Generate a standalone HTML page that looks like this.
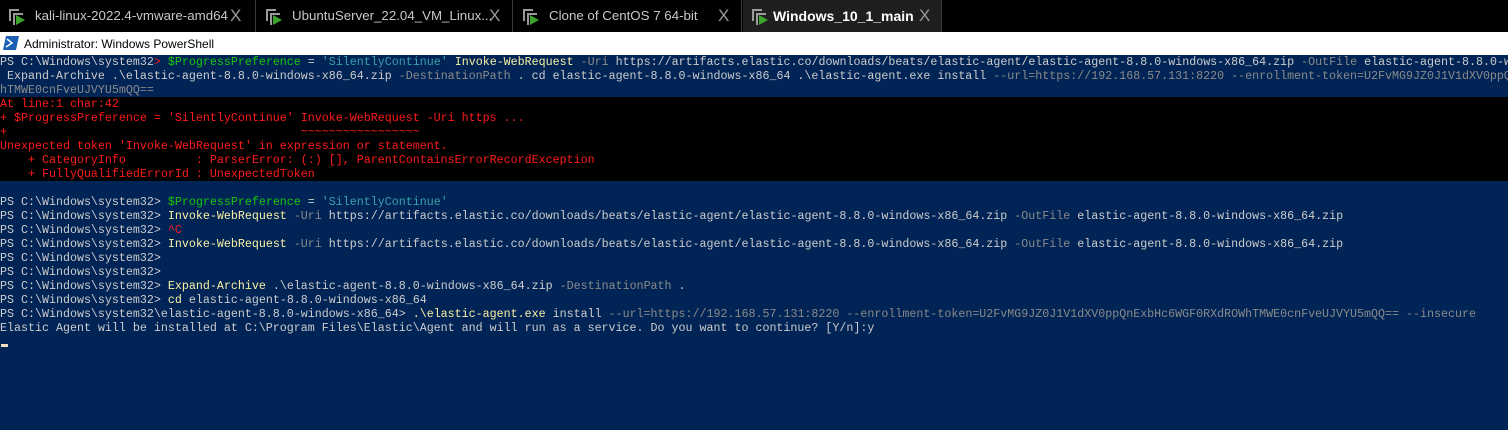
<!DOCTYPE html>
<html><head><meta charset="utf-8"><style>
*{margin:0;padding:0;box-sizing:border-box}
body{width:1508px;height:430px;overflow:hidden;background:#012456;position:relative;font-family:"Liberation Sans",sans-serif}
#tabs{position:absolute;left:0;top:0;width:1508px;height:32px;background:#000}
.tab{position:absolute;top:0;height:32px;border-right:1px solid #3a3a3a;color:#c8c8c8;font-size:13.3px}
.tab .ic{position:absolute;left:8px;top:7px}
.tab .t{position:absolute;left:35px;top:8px;white-space:nowrap}
.tab .x{position:absolute;top:6px;font-size:17px;color:#9a9a9a}
#title{position:absolute;left:0;top:32px;width:1508px;height:23px;background:#fff;font-size:12px;color:#000}
#title .t{position:absolute;left:24px;top:5px}
#term{position:absolute;left:0;top:55px;width:1508px;font-family:"Liberation Mono",monospace;font-size:11.67px;line-height:14px;color:#cccccc;overflow:hidden}
.l{height:14px;overflow:hidden;white-space:pre}
.blk{background:#000}
.r{color:#ff1a1a}.g{color:#16c60c}.y{color:#f9f1a5}.d{color:#8a8a8a}.s{color:#3aa0a8}.w{color:#cccccc}
</style></head><body>
<div id="tabs">
 <div class="tab" style="left:0;width:256px"><svg class="ic" width="20" height="20" viewBox="0 0 20 20"><path d="M1 2h10v2H3v10H1z M5 6h10v2H7v10H5z" fill="#9a9a9a"/><path d="M8 8l9 5-9 5z" fill="#3aa52a"/></svg><span class="t">kali-linux-2022.4-vmware-amd64</span><span class="x" style="left:230px">X</span></div>
 <div class="tab" style="left:257px;width:256px"><svg class="ic" width="20" height="20" viewBox="0 0 20 20"><path d="M1 2h10v2H3v10H1z M5 6h10v2H7v10H5z" fill="#9a9a9a"/><path d="M8 8l9 5-9 5z" fill="#3aa52a"/></svg><span class="t">UbuntuServer_22.04_VM_Linux...</span><span class="x" style="left:232px">X</span></div>
 <div class="tab" style="left:514px;width:228px"><svg class="ic" width="20" height="20" viewBox="0 0 20 20"><path d="M1 2h10v2H3v10H1z M5 6h10v2H7v10H5z" fill="#9a9a9a"/><path d="M8 8l9 5-9 5z" fill="#3aa52a"/></svg><span class="t">Clone of CentOS 7 64-bit</span><span class="x" style="left:204px">X</span></div>
 <div class="tab" style="left:743px;width:199px;background:#1f1f1f"><svg class="ic" width="20" height="20" viewBox="0 0 20 20"><path d="M1 2h10v2H3v10H1z M5 6h10v2H7v10H5z" fill="#9a9a9a"/><path d="M8 8l9 5-9 5z" fill="#3aa52a"/></svg><span class="t" style="left:30px;color:#fff;font-weight:bold;font-size:14px">Windows_10_1_main</span><span class="x" style="left:176px">X</span></div>
</div>
<div id="title"><svg style="position:absolute;left:3px;top:4px" width="16" height="14" viewBox="0 0 16 14"><path d="M3 0h13l-3 14H0z" fill="#1b5fb5"/><path d="M4 3l5 4-6 4" stroke="#fff" stroke-width="1.5" fill="none"/></svg><span class="t">Administrator: Windows PowerShell</span></div>
<div id="term"><div class="l">PS C:\Windows\system32<span class="r">&gt;</span> <span class="g">$ProgressPreference</span> = <span class="s">'SilentlyContinue'</span> <span class="y">Invoke-WebRequest</span> <span class="d">-Uri</span> https://artifacts.elastic.co/downloads/beats/elastic-agent/elastic-agent-8.8.0-windows-x86_64.zip <span class="d">-OutFile</span> elastic-agent-8.8.0-windows-x86_64.zip</div><div class="l"> Expand-Archive .\elastic-agent-8.8.0-windows-x86_64.zip <span class="d">-DestinationPath</span> . cd elastic-agent-8.8.0-windows-x86_64 .\elastic-agent.exe install <span class="d">--url=https://192.168.57.131:8220 --enrollment-token=U2FvMG9JZ0J1V1dXV0ppQnExbHc6WGF0RXdROWhTMWE0cnFveUJVYU5mQQ==</span></div><div class="l d">hTMWE0cnFveUJVYU5mQQ==</div><div class="blk r"><div class="l">At line:1 char:42</div><div class="l">+ $ProgressPreference = 'SilentlyContinue' Invoke-WebRequest -Uri https ...</div><div class="l">+                                          ~~~~~~~~~~~~~~~~~</div><div class="l">Unexpected token 'Invoke-WebRequest' in expression or statement.</div><div class="l">    + CategoryInfo          : ParserError: (:) [], ParentContainsErrorRecordException</div><div class="l">    + FullyQualifiedErrorId : UnexpectedToken</div></div><div class="l"> </div><div class="l">PS C:\Windows\system32&gt; <span class="g">$ProgressPreference</span> = <span class="s">'SilentlyContinue'</span></div><div class="l">PS C:\Windows\system32&gt; <span class="y">Invoke-WebRequest</span> <span class="d">-Uri</span> https://artifacts.elastic.co/downloads/beats/elastic-agent/elastic-agent-8.8.0-windows-x86_64.zip <span class="d">-OutFile</span> elastic-agent-8.8.0-windows-x86_64.zip</div><div class="l">PS C:\Windows\system32&gt; <span class="r">^C</span></div><div class="l">PS C:\Windows\system32&gt; <span class="y">Invoke-WebRequest</span> <span class="d">-Uri</span> https://artifacts.elastic.co/downloads/beats/elastic-agent/elastic-agent-8.8.0-windows-x86_64.zip <span class="d">-OutFile</span> elastic-agent-8.8.0-windows-x86_64.zip</div><div class="l">PS C:\Windows\system32&gt;</div><div class="l">PS C:\Windows\system32&gt;</div><div class="l">PS C:\Windows\system32&gt; <span class="y">Expand-Archive</span> .\elastic-agent-8.8.0-windows-x86_64.zip <span class="d">-DestinationPath</span> .</div><div class="l">PS C:\Windows\system32&gt; <span class="y">cd</span> elastic-agent-8.8.0-windows-x86_64</div><div class="l">PS C:\Windows\system32\elastic-agent-8.8.0-windows-x86_64&gt; <span class="y">.\elastic-agent.exe</span> install <span class="d">--url=https://192.168.57.131:8220 --enrollment-token=U2FvMG9JZ0J1V1dXV0ppQnExbHc6WGF0RXdROWhTMWE0cnFveUJVYU5mQQ== --insecure</span></div><div class="l">Elastic Agent will be installed at C:\Program Files\Elastic\Agent and will run as a service. Do you want to continue? [Y/n]:y</div></div>
<div style="position:absolute;left:1px;top:344px;width:7px;height:3px;background:#f0e0c0"></div>
</body></html>
